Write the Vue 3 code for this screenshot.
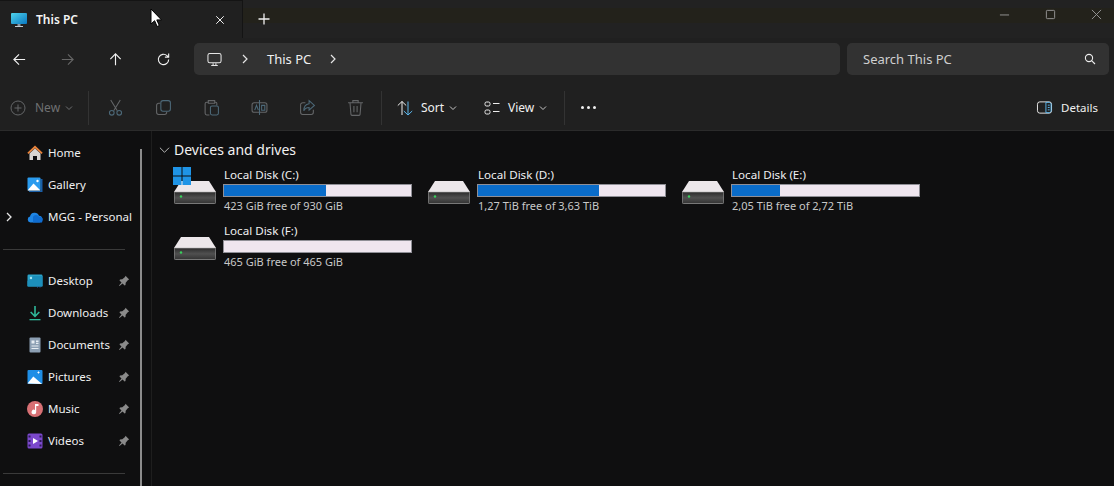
<script setup>
const toolIcons = ["cut", "copy", "paste", "rename", "share", "trash"];

const quickTop = [
  { name: "Home", icon: "home" },
  { name: "Gallery", icon: "gallery" },
  { name: "MGG - Personal", icon: "cloud", expand: true },
];

const quickPinned = [
  { name: "Desktop", icon: "desktop" },
  { name: "Downloads", icon: "downloads" },
  { name: "Documents", icon: "documents" },
  { name: "Pictures", icon: "pictures" },
  { name: "Music", icon: "music" },
  { name: "Videos", icon: "videos" },
];

const drives = [
  { name: "Local Disk (C:)", free: "423 GiB free of 930 GiB", used: 54.5, system: true },
  { name: "Local Disk (D:)", free: "1,27 TiB free of 3,63 TiB", used: 64.7 },
  { name: "Local Disk (E:)", free: "2,05 TiB free of 2,72 TiB", used: 25.5 },
  { name: "Local Disk (F:)", free: "465 GiB free of 465 GiB", used: 0 },
];
</script>

<template>
  <div class="explorer">
    <header class="tabbar">
      <div class="tab">
        <svg class="tab-icon" viewBox="0 0 18 18">
          <defs>
            <linearGradient id="screen" x1="0" y1="0" x2="1" y2="1">
              <stop offset="0" stop-color="#4fd3ea" />
              <stop offset="1" stop-color="#0a78c2" />
            </linearGradient>
          </defs>
          <rect x="1" y="2" width="16" height="11" rx="1" fill="url(#screen)" />
          <path d="M7.5 13h3v2h-3z" fill="#8b98a3" />
          <path d="M5 15h8v1H5z" fill="#c4ccd2" />
        </svg>
        <span class="tab-title">This PC</span>
        <svg class="tab-close" viewBox="0 0 12 12"><path d="M1.5 1.5l9 9M10.5 1.5l-9 9" /></svg>
      </div>
      <svg class="tab-add" viewBox="0 0 12 12"><path d="M6 .5v11M.5 6h11" /></svg>
      <div class="window-buttons">
        <svg viewBox="0 0 12 12"><path d="M1 6.5h10" /></svg>
        <svg viewBox="0 0 12 12"><rect x="1.5" y="1.5" width="9" height="9" rx="1" /></svg>
        <svg viewBox="0 0 12 12"><path d="M1 1l10 10M11 1L1 11" /></svg>
      </div>
    </header>

    <nav class="navbar">
      <div class="nav-buttons">
        <button class="nav-btn" type="button" aria-label="Back">
          <svg viewBox="0 0 16 16"><path d="M14 8H2M7.5 2.5L2 8l5.500 5.500" /></svg>
        </button>
        <button class="nav-btn is-off" type="button" aria-label="Forward">
          <svg viewBox="0 0 16 16"><path d="M2 8h12M8.500 2.500L14 8l-5.500 5.500" /></svg>
        </button>
        <button class="nav-btn" type="button" aria-label="Up">
          <svg viewBox="0 0 16 16"><path d="M8 14V2M2.500 7.500L8 2l5.500 5.500" /></svg>
        </button>
        <button class="nav-btn" type="button" aria-label="Refresh">
          <svg viewBox="0 0 16 16"><path d="M13.500 8a5.500 5.500 0 1 1-1.800-4.100L13.500 5.500M13.500 1.500v4h-4" /></svg>
        </button>
      </div>
      <div class="address">
        <svg class="address-pc" viewBox="0 0 16 16"><rect x="1" y="1.500" width="14" height="10" rx="2" /><path d="M4.500 14.500h7M6.500 12v2M9.500 12v2" /></svg>
        <svg class="crumb-chev" viewBox="0 0 8 10"><path d="M2 1l4 4-4 4" /></svg>
        <span class="crumb">This PC</span>
        <svg class="crumb-chev" viewBox="0 0 8 10"><path d="M2 1l4 4-4 4" /></svg>
      </div>
      <div class="search">
        <span>Search This PC</span>
        <svg viewBox="0 0 12 12"><circle cx="5" cy="5" r="3.600" /><path d="M7.600 7.600L11 11" /></svg>
      </div>
    </nav>

    <div class="toolbar">
      <div class="tool-new is-off">
        <svg class="tool-svg" viewBox="0 0 16 16"><circle cx="8" cy="8" r="7" /><path d="M8 4.500v7M4.500 8h7" /></svg>
        <span>New</span>
        <svg class="menu-chev" viewBox="0 0 8 6"><path d="M1 1.500l3 3 3-3" /></svg>
      </div>
      <i class="tool-sep"></i>
      <div class="tool-group">
        <div v-for="icon in toolIcons" :key="icon" class="tool-icon">
          <svg class="tool-svg" viewBox="0 0 16 16">
            <template v-if="icon === 'cut'">
              <path d="M3.500 1l6.200 10M12.500 1L6.300 11" />
              <circle cx="4.500" cy="13" r="2.200" class="tint" />
              <circle cx="11.500" cy="13" r="2.200" class="tint" />
            </template>
            <template v-else-if="icon === 'copy'">
              <rect x="5.500" y="1.500" width="9" height="10" rx="2" class="tint" />
              <path d="M5 4H3.500a2 2 0 0 0-2 2v6.500a2 2 0 0 0 2 2H9a2 2 0 0 0 2-2V12" />
            </template>
            <template v-else-if="icon === 'paste'">
              <path d="M5 3H3.500a1.500 1.500 0 0 0-1.500 1.500v9A1.500 1.500 0 0 0 3.500 15H6M11 3h1a1 1 0 0 1 1 1v2M5 1.500h6V4H5z" />
              <rect x="7" y="6.500" width="7.500" height="8.500" rx="1.500" class="tint" />
            </template>
            <template v-else-if="icon === 'rename'">
              <rect x="1" y="3.500" width="14" height="9" rx="2" />
              <path d="M8 1v14M3.500 10.500L5.200 6l1.700 4.500M10 6h3v4.500h-3z" class="tint" />
            </template>
            <template v-else-if="icon === 'share'">
              <path d="M13.500 10v2.500a2 2 0 0 1-2 2h-8a2 2 0 0 1-2-2v-7a2 2 0 0 1 2-2H6" />
              <path d="M9.500 1.500L14.500 6l-5 4.500V8C7 8 5.500 9 4.500 11c0-4 2-6 5-6.500z" class="tint" />
            </template>
            <template v-else>
              <path d="M1 3.500h14M5.500 3.500V1.500h5v2M2.800 3.500l.9 11a1 1 0 0 0 1 .9h6.600a1 1 0 0 0 1-.9l.9-11M6.500 6.500v6M9.500 6.500v6" />
            </template>
          </svg>
        </div>
      </div>
      <i class="tool-sep"></i>
      <div class="tool-menu sort">
        <svg class="tool-svg bright" viewBox="0 0 16 16">
          <path d="M5 15V1.500M.8 5.500L5 1.500l4.200 4" />
          <path d="M11 1.500V15M6.800 11l4.200 4 4.200-4" class="blue" />
        </svg>
        <span>Sort</span>
        <svg class="menu-chev" viewBox="0 0 8 6"><path d="M1 1.500l3 3 3-3" /></svg>
      </div>
      <div class="tool-menu view">
        <svg class="tool-svg bright" viewBox="0 0 16 16">
          <rect x="1" y="2" width="5" height="4" rx="1.500" />
          <rect x="1" y="10" width="5" height="4" rx="1.500" />
          <path d="M9 3.500h6.500M9 11.500h6.500" />
        </svg>
        <span>View</span>
        <svg class="menu-chev" viewBox="0 0 8 6"><path d="M1 1.500l3 3 3-3" /></svg>
      </div>
      <i class="tool-sep"></i>
      <div class="dots"><b></b><b></b><b></b></div>
      <div class="details">
        <svg class="tool-svg bright" viewBox="0 0 16 16">
          <rect x=".5" y="2" width="15" height="12" rx="2.500" />
          <path d="M9.500 2.500v11h4l1.500-1.500V4l-1.500-1.500zM11.500 5.500h2M11.500 8h2M11.500 10.500h2" class="blue" />
        </svg>
        <span>Details</span>
      </div>
    </div>

    <div class="body">
      <aside class="sidebar">
        <ul class="nav-list">
          <li v-for="item in quickTop" :key="item.name" class="nav-item">
            <svg v-if="item.expand" class="expander" viewBox="0 0 8 10"><path d="M2 1l4 4-4 4" /></svg>
            <svg class="nav-icon" viewBox="0 0 16 16">
              <template v-if="item.icon === 'home'">
                <path d="M8 .5L.3 7.800 1.500 9 8 3.200 14.500 9l1.200-1.200z" fill="#e8823a" />
                <path d="M2.500 8.500L8 3.500l5.500 5V15H10v-4H6v4H2.500z" fill="#d9d6d2" />
              </template>
              <template v-else-if="item.icon === 'gallery'">
                <path d="M13.500 2H15.500v13H2v-1h11.500z" fill="#1a5fa8" />
                <rect x=".5" y=".5" width="13" height="13" rx="1" fill="#2a9bee" />
                <path d="M.5 13.500L6.500 6.500l7 7z" fill="#fff" />
                <circle cx="10.500" cy="4" r="1.200" fill="#fff" />
              </template>
              <template v-else>
                <path d="M3.500 13.500A3 3 0 0 1 3 7.600 4.700 4.700 0 0 1 12 6.800a3.400 3.400 0 0 1 .7 6.700z" fill="#1f86e5" />
                <path d="M6 7.800a3.500 3.500 0 0 1 6 0 3 3 0 0 1 3.800 3L15 13.500H6z" fill="#0f6cd0" />
              </template>
            </svg>
            <span>{{ item.name }}</span>
          </li>
        </ul>
        <hr class="nav-line" />
        <ul class="nav-list">
          <li v-for="item in quickPinned" :key="item.name" class="nav-item">
            <svg class="nav-icon" viewBox="0 0 16 16">
              <template v-if="item.icon === 'desktop'">
                <rect x=".5" y="1.500" width="15" height="12" rx="1.200" fill="#2aa2c8" />
                <path d="M.5 13.500V8L6 3h9.500v10.500z" fill="#1c8fbb" />
                <circle cx="4" cy="5" r="1.200" fill="#a9e6f2" />
                <path d="M10 13h1v1.500h-1zM12.500 13h1v1.500h-1z" fill="#2568a8" />
              </template>
              <template v-else-if="item.icon === 'downloads'">
                <path d="M7.200 1h1.600v8.500l3-3 1.100 1.100L8 12.500 3.100 7.600l1.100-1.100 3 3z" fill="#2fb79a" />
                <path d="M2.500 14h11v1.300h-11z" fill="#2fb79a" />
              </template>
              <template v-else-if="item.icon === 'documents'">
                <rect x="2.500" y=".5" width="11" height="15" rx="1" fill="#8c9fb3" />
                <path d="M4.500 3.500h3v3h-3zM9 3.500h2.500V5H9zM9 5.700h2.500V7H9zM4.500 8.500h7v1h-7zM4.500 11h7v1h-7z" fill="#e6ecf2" />
              </template>
              <template v-else-if="item.icon === 'pictures'">
                <rect x=".5" y="1" width="15" height="14" rx="1" fill="#1e8ee6" />
                <path d="M.5 14.500l5.800-7 8.700 7.500z" fill="#fff" />
                <path d="M11.500 2.500v2M10.500 3.500h2" stroke="#fff" fill="none" />
              </template>
              <template v-else-if="item.icon === 'music'">
                <circle cx="8" cy="8" r="8" fill="#d77074" />
                <path d="M8 3h3.500v2H9.200v6a2.300 2.300 0 1 1-1.200-2z" fill="#fff" />
              </template>
              <template v-else>
                <rect x=".5" y=".5" width="15" height="15" rx="1.500" fill="#7b48cc" />
                <path d="M6 5l5 3-5 3z" fill="#fff" />
                <path d="M1.500 2.500h2v2h-2zM1.500 7h2v2h-2zM1.500 11.500h2v2h-2zM12.500 2.500h2v2h-2zM12.500 7h2v2h-2zM12.500 11.500h2v2h-2z" fill="#2d1a55" />
              </template>
            </svg>
            <span>{{ item.name }}</span>
            <svg class="pin" viewBox="0 0 12 12"><path d="M7.500.8l3.700 3.700-1.200.5-2.300 2.700-.2 2.300-1 .5-1.900-2L1.500 11l-.5-.5 2.500-3.100-2-1.900.5-1 2.300-.2L7 2z" /></svg>
          </li>
        </ul>
        <hr class="nav-line" />
        <div class="scroll-thumb"></div>
      </aside>

      <main class="content">
        <h2 class="group-head">
          <svg viewBox="0 0 12 8"><path d="M1 1.500l5 5 5-5" /></svg>
          Devices and drives
        </h2>
        <div class="drive-grid">
          <div v-for="drive in drives" :key="drive.name" class="drive">
            <div class="drive-art">
              <svg class="disk" viewBox="0 0 42 23">
                <defs>
                  <linearGradient id="front" x1="0" y1="0" x2="0" y2="1">
                    <stop offset="0" stop-color="#2c2c2c" />
                    <stop offset=".5" stop-color="#505050" />
                    <stop offset="1" stop-color="#333333" />
                  </linearGradient>
                </defs>
                <path d="M7 0h28l7 11H0z" fill="#ece7ea" />
                <rect x=".3" y="11" width="41.400" height="11.500" rx="1" fill="url(#front)" stroke="#b4b4b4" stroke-width=".6" />
                <circle cx="7" cy="15.500" r="1.200" fill="#38d25c" />
              </svg>
              <svg v-if="drive.system" class="winlogo" viewBox="0 0 18 18">
                <path d="M0 0h8.500v8.500H0zM9.500 0H18v8.500H9.500zM0 9.500h8.500V18H0zM9.500 9.500H18V18H9.500z" fill="#1f94e6" />
              </svg>
            </div>
            <div class="drive-info">
              <div class="drive-name">{{ drive.name }}</div>
              <div class="drive-bar"><div class="drive-used" :style="{ width: drive.used + '%' }"></div></div>
              <div class="drive-free">{{ drive.free }}</div>
            </div>
          </div>
        </div>
      </main>
    </div>

    <svg class="cursor" viewBox="0 0 12 20">
      <path d="M1 1v15l3.600-3.300 2.500 5.800 2.200-1-2.500-5.600h4.700z" fill="#fff" stroke="#000" stroke-width="1" />
    </svg>
  </div>
</template>

<style>
html,
body {
  margin: 0;
  background: #0f0f10;
}
</style>

<style scoped>
.explorer {
  position: relative;
  width: 1114px;
  height: 486px;
  overflow: hidden;
  display: flex;
  flex-direction: column;
  color: #f2f2f2;
  background: #0f0f10;
  font-family: "Noto Sans", "Open Sans", sans-serif;
  font-size: 11.5px;
}

svg {
  display: block;
  flex: none;
}

/* title strip */
.tabbar {
  height: 38px;
  display: flex;
  align-items: center;
  background: linear-gradient(#222222 8px, #23221b 8px, #23221b 23px, #222222 23px);
}

.tab {
  width: 243px;
  height: 38px;
  padding: 0 17px 0 10px;
  box-sizing: border-box;
  display: flex;
  align-items: center;
  background: #202020;
  border-top: 1px solid #141414;
  border-right: 1px solid #141414;
}

.tab-icon {
  width: 18px;
  height: 18px;
}

.tab-title {
  margin-left: 8px;
  flex: 1;
  font-size: 12px;
  font-weight: 600;
  color: #f4f4f4;
}

.tab-close {
  width: 10px;
  height: 10px;
  stroke: #eee;
  stroke-width: 1.200;
  fill: none;
}

.tab-add {
  width: 12px;
  height: 12px;
  margin-left: 15px;
  stroke: #f0f0f0;
  stroke-width: 1.300;
  fill: none;
}

.window-buttons {
  margin-left: auto;
  display: flex;
  gap: 35px;
  padding: 0 12px 9px 0;
}

.window-buttons svg {
  width: 11px;
  height: 11px;
  fill: none;
  stroke: #9a9a9a;
}

/* navigation row */
.navbar {
  height: 44px;
  display: flex;
  align-items: flex-start;
  padding-top: 5px;
  box-sizing: border-box;
  background: #202020;
}

.nav-buttons {
  width: 199px;
  margin-left: -5px;
  display: flex;
  flex: none;
}

.nav-btn {
  width: 48px;
  height: 32px;
  padding: 0;
  display: grid;
  place-items: center;
  background: none;
  border: 0;
}

.nav-btn svg {
  width: 15px;
  height: 15px;
  fill: none;
  stroke: #f2f2f2;
  stroke-width: 1.200;
}

.nav-btn.is-off svg {
  stroke: #666;
}

.address {
  width: 646px;
  height: 32px;
  padding-left: 13px;
  box-sizing: border-box;
  display: flex;
  align-items: center;
  background: #323232;
  border-radius: 5px;
}

.address-pc {
  width: 15px;
  height: 15px;
  fill: none;
  stroke: #e6e6e6;
  stroke-width: 1.100;
}

.crumb-chev {
  width: 8px;
  height: 10px;
  margin-left: 19px;
  fill: none;
  stroke: #e6e6e6;
  stroke-width: 1.200;
}

.crumb {
  margin-left: 18px;
  width: 62px;
  font-size: 13px;
  color: #f0f0f0;
}

.crumb + .crumb-chev {
  margin-left: 0;
}

.search {
  width: 262px;
  height: 32px;
  margin-left: 7px;
  padding: 0 13px 0 16px;
  box-sizing: border-box;
  display: flex;
  align-items: center;
  justify-content: space-between;
  background: #323232;
  border-radius: 5px;
  font-size: 13px;
  color: #cfcfcf;
}

.search svg {
  width: 12px;
  height: 12px;
  fill: none;
  stroke: #eee;
  stroke-width: 1.100;
}

/* command bar */
.toolbar {
  height: 49px;
  display: flex;
  align-items: center;
  background: #202020;
  border-bottom: 1px solid #2b2b2b;
  box-sizing: border-box;
  padding-top: 3px;
  font-size: 12px;
}

.tool-svg {
  width: 16px;
  height: 16px;
  fill: none;
  stroke: #646668;
  stroke-width: 1;
}

.tool-icon .tool-svg {
  width: 17px;
  height: 17px;
}

.tool-svg .tint {
  stroke: #4c6878;
}

.tool-svg.bright {
  stroke: #eeeeee;
}

.tool-svg .blue {
  stroke: #5cb8ee;
}

.tool-new {
  width: 88px;
  padding-left: 10px;
  box-sizing: border-box;
  display: flex;
  align-items: center;
  color: #6f7072;
}

.tool-new span {
  margin-left: 9px;
}

.tool-new .menu-chev {
  margin-left: 5px;
  stroke: #6f7072;
}

.tool-sep {
  width: 1px;
  height: 34px;
  background: #333;
}

.tool-group {
  display: flex;
  width: 292px;
  padding-left: 2px;
  box-sizing: border-box;
}

.tool-icon {
  width: 48px;
  display: grid;
  place-items: center;
}

.tool-menu {
  display: flex;
  align-items: center;
  color: #f0f0f0;
}

.tool-menu span {
  margin-left: 8px;
}

.menu-chev {
  width: 8px;
  height: 6px;
  margin-left: 5px;
  fill: none;
  stroke: #c8c8c8;
  stroke-width: 1;
}

.sort {
  margin-left: 15px;
  width: 87px;
}

.view {
  width: 80px;
}

.dots {
  margin-left: 16px;
  display: flex;
  gap: 3px;
}

.dots b {
  width: 3px;
  height: 3px;
  border-radius: 50%;
  background: #f0f0f0;
}

.details {
  margin-left: auto;
  padding-right: 16px;
  display: flex;
  align-items: center;
  gap: 8px;
  font-size: 11.5px;
  color: #f0f0f0;
}

.details .tool-svg {
  width: 17px;
  height: 15px;
}

/* left tree */
.body {
  flex: 1;
  display: flex;
  min-height: 0;
}

.sidebar {
  position: relative;
  width: 152px;
  flex: none;
  padding-top: 6px;
  box-sizing: border-box;
  border-right: 1px solid #1e1e1e;
}

.nav-list {
  margin: 0;
  padding: 0;
  list-style: none;
}

.nav-item {
  position: relative;
  height: 32px;
  display: flex;
  align-items: center;
  padding-left: 27px;
}

.expander {
  position: absolute;
  left: 5px;
  top: 11px;
  width: 8px;
  height: 10px;
  fill: none;
  stroke: #e6e6e6;
  stroke-width: 1.300;
}

.nav-icon {
  width: 16px;
  height: 16px;
}

.nav-item > span {
  margin: 0 0 2px 5px;
  color: #f0f0f0;
}

.pin {
  position: absolute;
  left: 118px;
  top: 10px;
  width: 12px;
  height: 12px;
  fill: #8a8a8a;
}

.nav-line {
  width: 122px;
  height: 1px;
  margin: 16px 0 15px 3px;
  border: 0;
  background: #3a3a3a;
}

.scroll-thumb {
  position: absolute;
  left: 140px;
  top: 18px;
  bottom: 0;
  width: 2px;
  background: #8c8c8c;
}

/* drives */
.content {
  flex: 1;
  padding: 9px 0 0 7px;
  box-sizing: border-box;
}

.group-head {
  margin: 0;
  display: flex;
  align-items: center;
  gap: 4px;
  font-size: 14px;
  font-weight: 400;
  line-height: 20px;
  color: #f2f2f2;
}

.group-head svg {
  width: 11px;
  height: 8px;
  fill: none;
  stroke: #c4c4c4;
}

.drive-grid {
  display: grid;
  grid-template-columns: repeat(3, 254px);
  grid-auto-rows: 56px;
  margin: 7px 0 0 15px;
}

.drive {
  display: flex;
  align-items: flex-start;
}

.drive-art {
  position: relative;
  width: 42px;
  height: 48px;
  flex: none;
}

.disk {
  position: absolute;
  left: 0;
  top: 14px;
  width: 42px;
  height: 23px;
}

.winlogo {
  position: absolute;
  left: -1px;
  top: 0;
  width: 18px;
  height: 18px;
}

.drive-info {
  margin-left: 7px;
  width: 189px;
}

.drive-name {
  line-height: 16px;
  padding-left: 1px;
  font-size: 11.6px;
  color: #f0f0f0;
}

.drive-bar {
  height: 13px;
  margin: 1px 0 0;
  box-sizing: border-box;
  background: #efe6ef;
  border: 1px solid #8f8f96;
  overflow: hidden;
}

.drive-used {
  height: 100%;
  background: #0a6cc9;
}

.drive-free {
  margin-top: 1px;
  padding-left: 1px;
  font-size: 11px;
  line-height: 16px;
  color: #c8c8c8;
}

.cursor {
  position: absolute;
  left: 150px;
  top: 8px;
  width: 12px;
  height: 20px;
}
</style>
